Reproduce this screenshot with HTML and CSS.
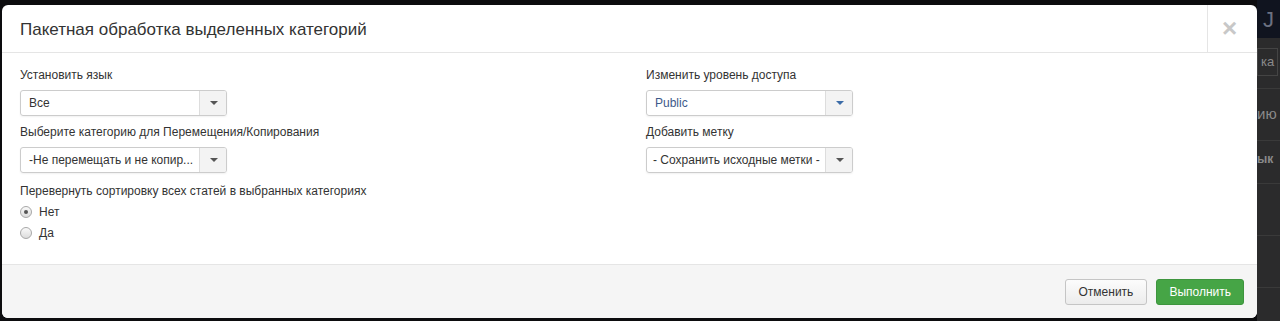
FILE: index.html
```html
<!DOCTYPE html>
<html lang="ru">
<head>
    <meta charset="UTF-8">
    <title>Пакетная обработка</title>
    <link rel="stylesheet" href="styles.css">
</head>
<body>
    <div class="modal">
        <div class="modal-header">
            <h3 class="modal-title">Пакетная обработка выделенных категорий</h3>
            <button class="close-btn">&times;</button>
        </div>

        <div class="modal-body">
            <div class="col">
                <div class="field">
                    <label>Установить язык</label>
                    <div class="select">
                        <span class="select-value">Все</span>
                        <span class="select-arrow"></span>
                    </div>
                </div>
                <div class="field">
                    <label>Выберите категорию для Перемещения/Копирования</label>
                    <div class="select">
                        <span class="select-value">-Не перемещать и не копир...</span>
                        <span class="select-arrow"></span>
                    </div>
                </div>
                <div class="field">
                    <label>Перевернуть сортировку всех статей в выбранных категориях</label>
                    <div class="radios">
                        <div class="radio-row"><span class="radio checked"></span>Нет</div>
                        <div class="radio-row"><span class="radio"></span>Да</div>
                    </div>
                </div>
            </div>

            <div class="col">
                <div class="field">
                    <label>Изменить уровень доступа</label>
                    <div class="select select-blue">
                        <span class="select-value">Public</span>
                        <span class="select-arrow"></span>
                    </div>
                </div>
                <div class="field">
                    <label>Добавить метку</label>
                    <div class="select">
                        <span class="select-value clip">- Сохранить исходные метки -</span>
                        <span class="select-arrow"></span>
                    </div>
                </div>
            </div>
        </div>

        <div class="modal-footer">
            <button class="btn">Отменить</button>
            <button class="btn btn-success">Выполнить</button>
        </div>
    </div>

    <div class="page-peek">
        <div class="peek-header">J</div>
        <div class="peek-row"><span class="peek-btn">ка</span></div>
        <div class="peek-row tall">ию</div>
        <div class="peek-row bold">ык</div>
        <div class="peek-row tall"></div>
        <div class="peek-row tall"></div>
        <div class="peek-row tall"></div>
    </div>
</body>
</html>
```

FILE: styles.css
```css
body {
    margin: 0;
    background: #0c0c0e;
    font-family: "Liberation Sans", Arial, sans-serif;
    font-size: 12px;
    color: #333;
    display: flex;
    height: 321px;
    overflow: hidden;
}

.modal {
    width: 1255px;
    height: 313px;
    margin: 5px 0 0 2px;
    background: #fff;
    border-radius: 6px;
    display: flex;
    flex-direction: column;
    overflow: hidden;
    flex-shrink: 0;
}

.modal-header {
    height: 47px;
    border-bottom: 1px solid #e5e5e5;
    display: flex;
    align-items: stretch;
}

.modal-title {
    flex: 1;
    margin: 0;
    padding-left: 18px;
    font-size: 17px;
    font-weight: normal;
    line-height: 49px;
    color: #333;
}

.close-btn {
    width: 50px;
    border: none;
    border-left: 1px solid #e5e5e5;
    background: transparent;
    color: #c8c8c8;
    font-family: "Liberation Sans", Arial, sans-serif;
    font-size: 26px;
    font-weight: bold;
    line-height: 1;
    padding: 0 6px 2px 0;
}

.modal-body {
    flex: 1;
    display: grid;
    grid-template-columns: 626px 1fr;
    padding: 13px 18px 0;
}

.field {
    margin-bottom: 7px;
}

.field label {
    display: block;
    line-height: 18px;
    margin-bottom: 6px;
}

.select {
    width: 205px;
    height: 24px;
    border: 1px solid #ccc;
    border-radius: 3px;
    box-shadow: 0 1px 2px rgba(0,0,0,0.06);
    display: flex;
    align-items: stretch;
    overflow: hidden;
}

.select-value {
    flex: 1;
    padding-left: 8px;
    line-height: 24px;
    white-space: nowrap;
    overflow: hidden;
}

.select-value.clip {
    padding-left: 6px;
}

.select-arrow {
    width: 26px;
    flex-shrink: 0;
    border-left: 1px solid #ddd;
    background: #f3f3f3;
    position: relative;
}

.select-arrow::after {
    content: "";
    position: absolute;
    left: 10px;
    top: 10px;
    border-left: 4px solid transparent;
    border-right: 4px solid transparent;
    border-top: 4px solid #555;
}

.select-blue .select-value {
    color: #3d5a8a;
}

.select-blue .select-arrow::after {
    border-top-color: #3c6ca8;
}

.field + .field + .field {
    margin-top: 9px;
}

.radios {
    margin-top: -5px;
}

.radio-row {
    display: flex;
    align-items: center;
    height: 21px;
}

.radio {
    width: 10px;
    height: 10px;
    border: 1px solid #a8a8a8;
    border-radius: 50%;
    background: linear-gradient(#fafafa, #dcdcdc);
    margin: 0 7px 0 0;
    position: relative;
}

.radio.checked::after {
    content: "";
    position: absolute;
    left: 3px;
    top: 3px;
    width: 4px;
    height: 4px;
    border-radius: 50%;
    background: #555;
}

.modal-footer {
    height: 53px;
    border-top: 1px solid #e5e5e5;
    background: #f5f5f5;
    display: flex;
    justify-content: flex-end;
    align-items: center;
    gap: 9px;
    padding: 0 13px 0 0;
}

.btn {
    height: 26px;
    padding: 0 13px;
    border: 1px solid #c5c5c5;
    border-radius: 3px;
    background: linear-gradient(#fcfcfc, #ececec);
    color: #333;
    font-family: "Liberation Sans", Arial, sans-serif;
    font-size: 12px;
}

.btn-success {
    background: #46a546;
    border-color: #3e953e;
    color: #fff;
    padding: 0 12px;
}

.page-peek {
    flex: 1;
    background: #2b2b2c;
    color: #777;
    font-size: 15px;
    overflow: hidden;
}

.peek-header {
    height: 38px;
    background: #10141f;
    color: #6c7181;
    font-size: 22px;
    line-height: 40px;
    padding-left: 6px;
}

.peek-row {
    height: 50px;
    border-bottom: 1px solid #3a3a3a;
    line-height: 50px;
    white-space: nowrap;
    color: #8a8a8a;
}

.peek-row.tall {
    height: 51px;
}

.peek-row.bold {
    font-weight: bold;
    font-size: 12px;
    height: 42px;
    line-height: 36px;
}

.peek-btn {
    display: inline-block;
    border: 1px solid #444;
    padding: 0 3px;
    font-size: 13px;
    line-height: 26px;
    margin-top: 10px;
    vertical-align: top;
}
```
